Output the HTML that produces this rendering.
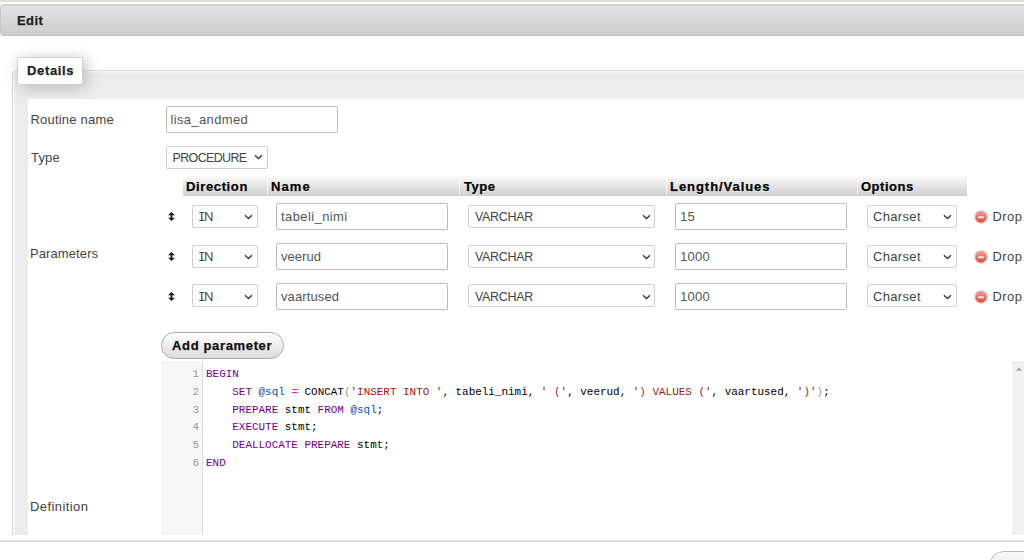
<!DOCTYPE html>
<html><head><meta charset="utf-8">
<style>
*{box-sizing:border-box;}
html,body{margin:0;padding:0;}
body{width:1024px;height:560px;overflow:hidden;position:relative;background:#fff;font-family:"Liberation Sans",sans-serif;font-size:13px;color:#444;}
.a{position:absolute;}
#topline{left:0;top:0;width:1024px;height:2px;background:linear-gradient(#e9e1d1 0,#e9e1d1 50%,#e2ddd3 50%,#e2ddd3 100%);}
#title{left:0;top:4px;width:1040px;height:32px;border:1px solid #c8c8c8;border-top:2px solid #d4d4d4;border-bottom-color:#c4c4c4;border-radius:4px;background:linear-gradient(#e3e3e3,#cccccc);}
#fs{left:12px;top:70px;width:1030px;height:480px;border:1px solid #d6d6d6;border-radius:4px 0 0 0;background:#ececec;box-shadow:inset 1px 1px 2px #fff;}
#legend{left:17px;top:57px;width:66px;height:28px;background:#fff;border:1px solid #d0d0d0;border-radius:2px;box-shadow:3px 3px 15px #bbb;}
#tbl{left:28px;top:99px;width:1000px;height:436px;background:#fff;}
#clip{left:0;top:0;width:1024px;height:535px;overflow:hidden;}
.t{position:absolute;white-space:nowrap;line-height:15px;}
.bd{font-weight:bold;-webkit-text-stroke:0.25px currentColor;}
.inp{position:absolute;height:27px;width:172px;border:1px solid #bdbdbd;border-radius:2px;background:#fff;}
.sel{position:absolute;height:23px;border:1px solid #d0d0d0;border-radius:2px;background:#fff;}
.chev{position:absolute;}
.th{position:absolute;top:176px;height:20px;background:linear-gradient(#fafafa,#cfcfcf);}
.sep{position:absolute;top:176px;width:1px;height:20px;background:linear-gradient(#fff,#f0f0f0);}
.drag{position:absolute;left:168px;}
.drop{position:absolute;left:974px;}
#btn{left:161px;top:332px;width:123px;height:27px;border:1px solid #aaa;border-radius:14px;background:linear-gradient(#ffffff,#dcdcdc);}
#gut{left:161px;top:361px;width:42px;height:180px;background:#f7f7f7;border-right:1px solid #ddd;}
.ln{position:absolute;width:38px;left:161px;text-align:right;font-family:"Liberation Mono",monospace;font-size:10.95px;color:#999;line-height:15px;}
.code{position:absolute;left:206px;font-family:"Liberation Mono",monospace;font-size:10.95px;color:#000;white-space:pre;line-height:15px;}
.k{color:#770088;}.v{color:#0055aa;}.s{color:#aa1111;}.o{color:#ff00ff;}.b{color:#999977;}
#sb{left:1012px;top:361px;width:14px;height:175px;background:#f1f1f1;}
#bline{left:0;top:540px;width:1024px;height:2px;background:linear-gradient(#e8e8e8 50%,#cfcfcf 50%);}
#bbtn{left:989px;top:551px;width:60px;height:30px;border:1px solid #b8b8b8;border-radius:15px;background:linear-gradient(#f8f8f8,#e0e0e0);}
</style></head><body>
<div class="a" id="topline"></div>
<div class="a" id="title"></div>
<div class="t bd" style="left:17px;top:12.5px;font-size:13px;letter-spacing:0.4px;color:#222;">Edit</div>
<div class="a" id="clip">
<div class="a" id="fs"></div>
<div class="a" id="legend"></div>
<div class="t bd" style="left:27px;top:63px;font-size:13px;letter-spacing:0.65px;color:#222;">Details</div>
<div class="a" id="tbl"></div>
<div class="t" style="left:30.5px;top:112px;font-size:13px;letter-spacing:0.2px;color:#444;">Routine name</div>
<div class="inp" style="left:166px;top:106px;"></div>
<div class="t" style="left:170.5px;top:112px;font-size:13px;letter-spacing:0.35px;color:#555;">lisa_andmed</div>
<div class="t" style="left:31px;top:150px;font-size:13px;letter-spacing:0.2px;color:#444;">Type</div>
<div class="sel" style="left:166px;top:146px;width:102px;"></div>
<div class="t" style="left:172.5px;top:151px;font-size:12.5px;letter-spacing:-0.65px;color:#444;">PROCEDURE</div>
<svg class="chev" style="left:254px;top:154px" width="9" height="6" viewBox="0 0 9 6"><path d="M1 1.2 L4.5 4.5 L8 1.2" fill="none" stroke="#3a3a3a" stroke-width="1.4"/></svg>
<div class="th" style="left:183px;width:84px;"></div>
<div class="sep" style="left:267px;"></div>
<div class="t bd" style="left:186px;top:179px;font-size:13px;letter-spacing:0.625px;color:#000;text-shadow:0 1px 0 #fff;">Direction</div>
<div class="th" style="left:268px;width:191px;"></div>
<div class="sep" style="left:459px;"></div>
<div class="t bd" style="left:271px;top:179px;font-size:13px;letter-spacing:1.1px;color:#000;text-shadow:0 1px 0 #fff;">Name</div>
<div class="th" style="left:460px;width:206px;"></div>
<div class="sep" style="left:666px;"></div>
<div class="t bd" style="left:464px;top:179px;font-size:13px;letter-spacing:0.5px;color:#000;text-shadow:0 1px 0 #fff;">Type</div>
<div class="th" style="left:667px;width:190px;"></div>
<div class="sep" style="left:857px;"></div>
<div class="t bd" style="left:670px;top:179px;font-size:13px;letter-spacing:0.95px;color:#000;text-shadow:0 1px 0 #fff;">Length/Values</div>
<div class="th" style="left:858px;width:109px;"></div>
<div class="t bd" style="left:861px;top:179px;font-size:13px;letter-spacing:0.5px;color:#000;text-shadow:0 1px 0 #fff;">Options</div>
<div class="t" style="left:30px;top:246px;font-size:13px;letter-spacing:0.1px;color:#444;">Parameters</div>
<div class="t" style="left:30px;top:499px;font-size:13px;letter-spacing:0.42px;color:#444;">Definition</div>
<svg class="drag" style="top:212px" width="7" height="9" viewBox="0 0 7 9"><path d="M3.5 0 L7 3.2 L4.4 3.2 L4.4 5.8 L7 5.8 L3.5 9 L0 5.8 L2.6 5.8 L2.6 3.2 L0 3.2Z" fill="#1a1a1a"/></svg>
<div class="sel" style="left:192px;top:205px;width:66px;"></div>
<div class="t" style="left:198px;top:209px;font-size:13px;letter-spacing:0.5px;color:#444;"><span style="font-family:'Liberation Mono',monospace;font-size:12.5px;letter-spacing:-1.6px;">I</span>N</div>
<svg class="chev" style="left:244px;top:214px" width="9" height="6" viewBox="0 0 9 6"><path d="M1 1.2 L4.5 4.5 L8 1.2" fill="none" stroke="#3a3a3a" stroke-width="1.4"/></svg>
<div class="inp" style="left:276px;top:203px;"></div>
<div class="t" style="left:281px;top:209px;font-size:13px;letter-spacing:0.41px;color:#555;">tabeli_nimi</div>
<div class="sel" style="left:468px;top:205px;width:187px;"></div>
<div class="t" style="left:475px;top:210px;font-size:12.5px;letter-spacing:-0.33px;color:#444;">VARCHAR</div>
<svg class="chev" style="left:642px;top:214px" width="9" height="6" viewBox="0 0 9 6"><path d="M1 1.2 L4.5 4.5 L8 1.2" fill="none" stroke="#3a3a3a" stroke-width="1.4"/></svg>
<div class="inp" style="left:675px;top:203px;"></div>
<div class="t" style="left:680px;top:209px;font-size:13px;letter-spacing:0.3px;color:#555;">15</div>
<div class="sel" style="left:867px;top:205px;width:90px;"></div>
<div class="t" style="left:873px;top:209px;font-size:13px;letter-spacing:0.33px;color:#444;">Charset</div>
<svg class="chev" style="left:943px;top:214px" width="9" height="6" viewBox="0 0 9 6"><path d="M1 1.2 L4.5 4.5 L8 1.2" fill="none" stroke="#3a3a3a" stroke-width="1.4"/></svg>
<svg class="drop" style="top:210px" width="14" height="14" viewBox="0 0 14 14"><defs><linearGradient id="lg203" x1="0" y1="0" x2="0" y2="1"><stop offset="0" stop-color="#f29a90"/><stop offset="1" stop-color="#df4a40"/></linearGradient></defs><circle cx="7" cy="6.9" r="6.5" fill="#f0a29a"/><circle cx="7" cy="6.9" r="5.3" fill="url(#lg203)"/><rect x="4.1" y="6.4" width="5.6" height="1.8" fill="#fff"/></svg>
<div class="t" style="left:992.5px;top:209px;font-size:13px;letter-spacing:0.4px;color:#444;">Drop</div>
<svg class="drag" style="top:252px" width="7" height="9" viewBox="0 0 7 9"><path d="M3.5 0 L7 3.2 L4.4 3.2 L4.4 5.8 L7 5.8 L3.5 9 L0 5.8 L2.6 5.8 L2.6 3.2 L0 3.2Z" fill="#1a1a1a"/></svg>
<div class="sel" style="left:192px;top:245px;width:66px;"></div>
<div class="t" style="left:198px;top:249px;font-size:13px;letter-spacing:0.5px;color:#444;"><span style="font-family:'Liberation Mono',monospace;font-size:12.5px;letter-spacing:-1.6px;">I</span>N</div>
<svg class="chev" style="left:244px;top:254px" width="9" height="6" viewBox="0 0 9 6"><path d="M1 1.2 L4.5 4.5 L8 1.2" fill="none" stroke="#3a3a3a" stroke-width="1.4"/></svg>
<div class="inp" style="left:276px;top:243px;"></div>
<div class="t" style="left:281px;top:249px;font-size:13px;letter-spacing:0.03px;color:#555;">veerud</div>
<div class="sel" style="left:468px;top:245px;width:187px;"></div>
<div class="t" style="left:475px;top:250px;font-size:12.5px;letter-spacing:-0.33px;color:#444;">VARCHAR</div>
<svg class="chev" style="left:642px;top:254px" width="9" height="6" viewBox="0 0 9 6"><path d="M1 1.2 L4.5 4.5 L8 1.2" fill="none" stroke="#3a3a3a" stroke-width="1.4"/></svg>
<div class="inp" style="left:675px;top:243px;"></div>
<div class="t" style="left:680px;top:249px;font-size:13px;letter-spacing:0.3px;color:#555;">1000</div>
<div class="sel" style="left:867px;top:245px;width:90px;"></div>
<div class="t" style="left:873px;top:249px;font-size:13px;letter-spacing:0.33px;color:#444;">Charset</div>
<svg class="chev" style="left:943px;top:254px" width="9" height="6" viewBox="0 0 9 6"><path d="M1 1.2 L4.5 4.5 L8 1.2" fill="none" stroke="#3a3a3a" stroke-width="1.4"/></svg>
<svg class="drop" style="top:250px" width="14" height="14" viewBox="0 0 14 14"><defs><linearGradient id="lg243" x1="0" y1="0" x2="0" y2="1"><stop offset="0" stop-color="#f29a90"/><stop offset="1" stop-color="#df4a40"/></linearGradient></defs><circle cx="7" cy="6.9" r="6.5" fill="#f0a29a"/><circle cx="7" cy="6.9" r="5.3" fill="url(#lg243)"/><rect x="4.1" y="6.4" width="5.6" height="1.8" fill="#fff"/></svg>
<div class="t" style="left:992.5px;top:249px;font-size:13px;letter-spacing:0.4px;color:#444;">Drop</div>
<svg class="drag" style="top:292px" width="7" height="9" viewBox="0 0 7 9"><path d="M3.5 0 L7 3.2 L4.4 3.2 L4.4 5.8 L7 5.8 L3.5 9 L0 5.8 L2.6 5.8 L2.6 3.2 L0 3.2Z" fill="#1a1a1a"/></svg>
<div class="sel" style="left:192px;top:284px;width:66px;"></div>
<div class="t" style="left:198px;top:289px;font-size:13px;letter-spacing:0.5px;color:#444;"><span style="font-family:'Liberation Mono',monospace;font-size:12.5px;letter-spacing:-1.6px;">I</span>N</div>
<svg class="chev" style="left:244px;top:294px" width="9" height="6" viewBox="0 0 9 6"><path d="M1 1.2 L4.5 4.5 L8 1.2" fill="none" stroke="#3a3a3a" stroke-width="1.4"/></svg>
<div class="inp" style="left:276px;top:283px;"></div>
<div class="t" style="left:281px;top:289px;font-size:13px;letter-spacing:0.11px;color:#555;">vaartused</div>
<div class="sel" style="left:468px;top:284px;width:187px;"></div>
<div class="t" style="left:475px;top:290px;font-size:12.5px;letter-spacing:-0.33px;color:#444;">VARCHAR</div>
<svg class="chev" style="left:642px;top:294px" width="9" height="6" viewBox="0 0 9 6"><path d="M1 1.2 L4.5 4.5 L8 1.2" fill="none" stroke="#3a3a3a" stroke-width="1.4"/></svg>
<div class="inp" style="left:675px;top:283px;"></div>
<div class="t" style="left:680px;top:289px;font-size:13px;letter-spacing:0.3px;color:#555;">1000</div>
<div class="sel" style="left:867px;top:284px;width:90px;"></div>
<div class="t" style="left:873px;top:289px;font-size:13px;letter-spacing:0.33px;color:#444;">Charset</div>
<svg class="chev" style="left:943px;top:294px" width="9" height="6" viewBox="0 0 9 6"><path d="M1 1.2 L4.5 4.5 L8 1.2" fill="none" stroke="#3a3a3a" stroke-width="1.4"/></svg>
<svg class="drop" style="top:290px" width="14" height="14" viewBox="0 0 14 14"><defs><linearGradient id="lg283" x1="0" y1="0" x2="0" y2="1"><stop offset="0" stop-color="#f29a90"/><stop offset="1" stop-color="#df4a40"/></linearGradient></defs><circle cx="7" cy="6.9" r="6.5" fill="#f0a29a"/><circle cx="7" cy="6.9" r="5.3" fill="url(#lg283)"/><rect x="4.1" y="6.4" width="5.6" height="1.8" fill="#fff"/></svg>
<div class="t" style="left:992.5px;top:289px;font-size:13px;letter-spacing:0.4px;color:#444;">Drop</div>
<div class="a" id="btn"></div>
<div class="t bd" style="left:172px;top:338px;font-size:13px;letter-spacing:0.65px;color:#111;">Add parameter</div>
<div class="a" id="gut"></div>
<div class="a" id="sb"><svg style="position:absolute;left:4px;top:5.5px" width="6" height="4" viewBox="0 0 6 4"><path d="M0 3.8 L3 0.3 L6 3.8Z" fill="#a3a3a3"/></svg></div>
<div class="ln" style="top:367.0px;">1</div>
<div class="code" style="top:367.0px;"><span class="k">BEGIN</span></div>
<div class="ln" style="top:384.8px;">2</div>
<div class="code" style="top:384.8px;">    <span class="k">SET</span> <span class="v">@sql</span> <span class="o">=</span> CONCAT<span class="b">(</span><span class="s">'INSERT INTO '</span>, tabeli_nimi, <span class="s">' ('</span>, veerud, <span class="s">') VALUES ('</span>, vaartused, <span class="s">')'</span><span class="b">)</span>;</div>
<div class="ln" style="top:402.6px;">3</div>
<div class="code" style="top:402.6px;">    <span class="k">PREPARE</span> stmt <span class="k">FROM</span> <span class="v">@sql</span>;</div>
<div class="ln" style="top:420.4px;">4</div>
<div class="code" style="top:420.4px;">    <span class="k">EXECUTE</span> stmt;</div>
<div class="ln" style="top:438.2px;">5</div>
<div class="code" style="top:438.2px;">    <span class="k">DEALLOCATE</span> <span class="k">PREPARE</span> stmt;</div>
<div class="ln" style="top:456.0px;">6</div>
<div class="code" style="top:456.0px;"><span class="k">END</span></div>
</div>
<div class="a" id="bline"></div>
<div class="a" id="bbtn"></div>
</body></html>
